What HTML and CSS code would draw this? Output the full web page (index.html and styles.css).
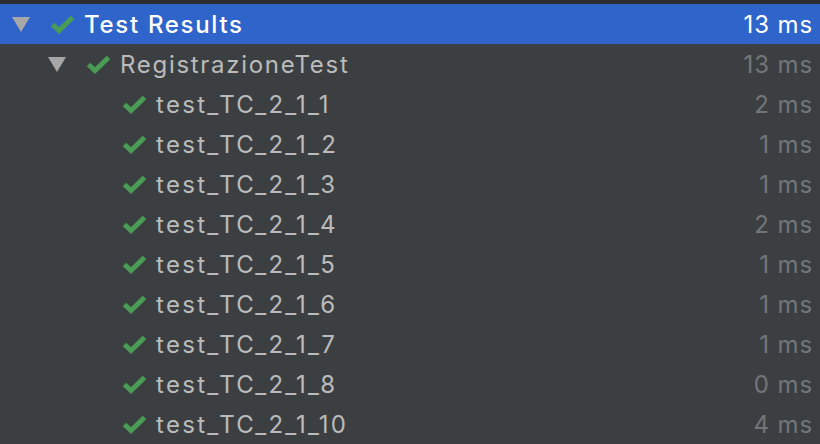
FILE: index.html
```html
<!DOCTYPE html>
<html>
<head>
<meta charset="utf-8">
<link rel="stylesheet" href="styles.css">
</head>
<body>
<div class="panel">
  <div class="topline"></div>
  <div class="row selected lvl0">
    <span class="tri"></span>
    <svg class="check" viewBox="0 0 25 20"><path d="M2.5 10.5 L9 16.5 L22.5 3.5" /></svg>
    <span class="name">Test Results</span>
    <span class="time">13 ms</span>
  </div>
  <div class="row lvl1">
    <span class="tri"></span>
    <svg class="check" viewBox="0 0 25 20"><path d="M2.5 10.5 L9 16.5 L22.5 3.5" /></svg>
    <span class="name">RegistrazioneTest</span>
    <span class="time">13 ms</span>
  </div>
  <div class="row lvl2">
    <svg class="check" viewBox="0 0 25 20"><path d="M2.5 10.5 L9 16.5 L22.5 3.5" /></svg>
    <span class="name">test_TC_2_1_1</span>
    <span class="time">2 ms</span>
  </div>
  <div class="row lvl2">
    <svg class="check" viewBox="0 0 25 20"><path d="M2.5 10.5 L9 16.5 L22.5 3.5" /></svg>
    <span class="name">test_TC_2_1_2</span>
    <span class="time">1 ms</span>
  </div>
  <div class="row lvl2">
    <svg class="check" viewBox="0 0 25 20"><path d="M2.5 10.5 L9 16.5 L22.5 3.5" /></svg>
    <span class="name">test_TC_2_1_3</span>
    <span class="time">1 ms</span>
  </div>
  <div class="row lvl2">
    <svg class="check" viewBox="0 0 25 20"><path d="M2.5 10.5 L9 16.5 L22.5 3.5" /></svg>
    <span class="name">test_TC_2_1_4</span>
    <span class="time">2 ms</span>
  </div>
  <div class="row lvl2">
    <svg class="check" viewBox="0 0 25 20"><path d="M2.5 10.5 L9 16.5 L22.5 3.5" /></svg>
    <span class="name">test_TC_2_1_5</span>
    <span class="time">1 ms</span>
  </div>
  <div class="row lvl2">
    <svg class="check" viewBox="0 0 25 20"><path d="M2.5 10.5 L9 16.5 L22.5 3.5" /></svg>
    <span class="name">test_TC_2_1_6</span>
    <span class="time">1 ms</span>
  </div>
  <div class="row lvl2">
    <svg class="check" viewBox="0 0 25 20"><path d="M2.5 10.5 L9 16.5 L22.5 3.5" /></svg>
    <span class="name">test_TC_2_1_7</span>
    <span class="time">1 ms</span>
  </div>
  <div class="row lvl2">
    <svg class="check" viewBox="0 0 25 20"><path d="M2.5 10.5 L9 16.5 L22.5 3.5" /></svg>
    <span class="name">test_TC_2_1_8</span>
    <span class="time">0 ms</span>
  </div>
  <div class="row lvl2">
    <svg class="check" viewBox="0 0 25 20"><path d="M2.5 10.5 L9 16.5 L22.5 3.5" /></svg>
    <span class="name">test_TC_2_1_10</span>
    <span class="time">4 ms</span>
  </div>
</div>
</body>
</html>
```

FILE: styles.css
```css
html, body {
  margin: 0;
  padding: 0;
  background: #3c3f41;
}
.panel {
  width: 820px;
  height: 444px;
  overflow: hidden;
  background: #3c3f41;
  font-family: Inter, "Noto Sans", sans-serif;
  font-size: 24px;
  color: #bbbbbb;
}
.topline {
  height: 4px;
  background: #2b2d2f;
}
.row {
  display: flex;
  align-items: center;
  height: 40px;
  padding-right: 8px;
  box-sizing: border-box;
}
.row.lvl0 { padding-left: 12px; }
.row.lvl1 { padding-left: 48px; }
.row.lvl2 { padding-left: 122px; }
.selected {
  background: #2f65ca;
  color: #ffffff;
}
.tri {
  width: 0;
  height: 0;
  border-left: 9px solid transparent;
  border-right: 9px solid transparent;
  border-top: 15px solid #a7a7a7;
  margin-right: 20px;
  margin-top: 1px;
}
.check {
  width: 25px;
  height: 20px;
  margin-right: 9px;
  flex: none;
}
.check path {
  fill: none;
  stroke: #499c54;
  stroke-width: 5;
  stroke-linecap: butt;
  stroke-linejoin: miter;
}
.name {
  flex: 1;
  white-space: nowrap;
  letter-spacing: 1.7px;
}
.lvl2 .name {
  letter-spacing: 2.3px;
}
.time {
  color: #727679;
  white-space: nowrap;
  letter-spacing: 0.9px;
  margin-right: -1px;
}
.selected .time {
  color: #ffffff;
}
.selected .name {
  font-weight: 500;
}
```
